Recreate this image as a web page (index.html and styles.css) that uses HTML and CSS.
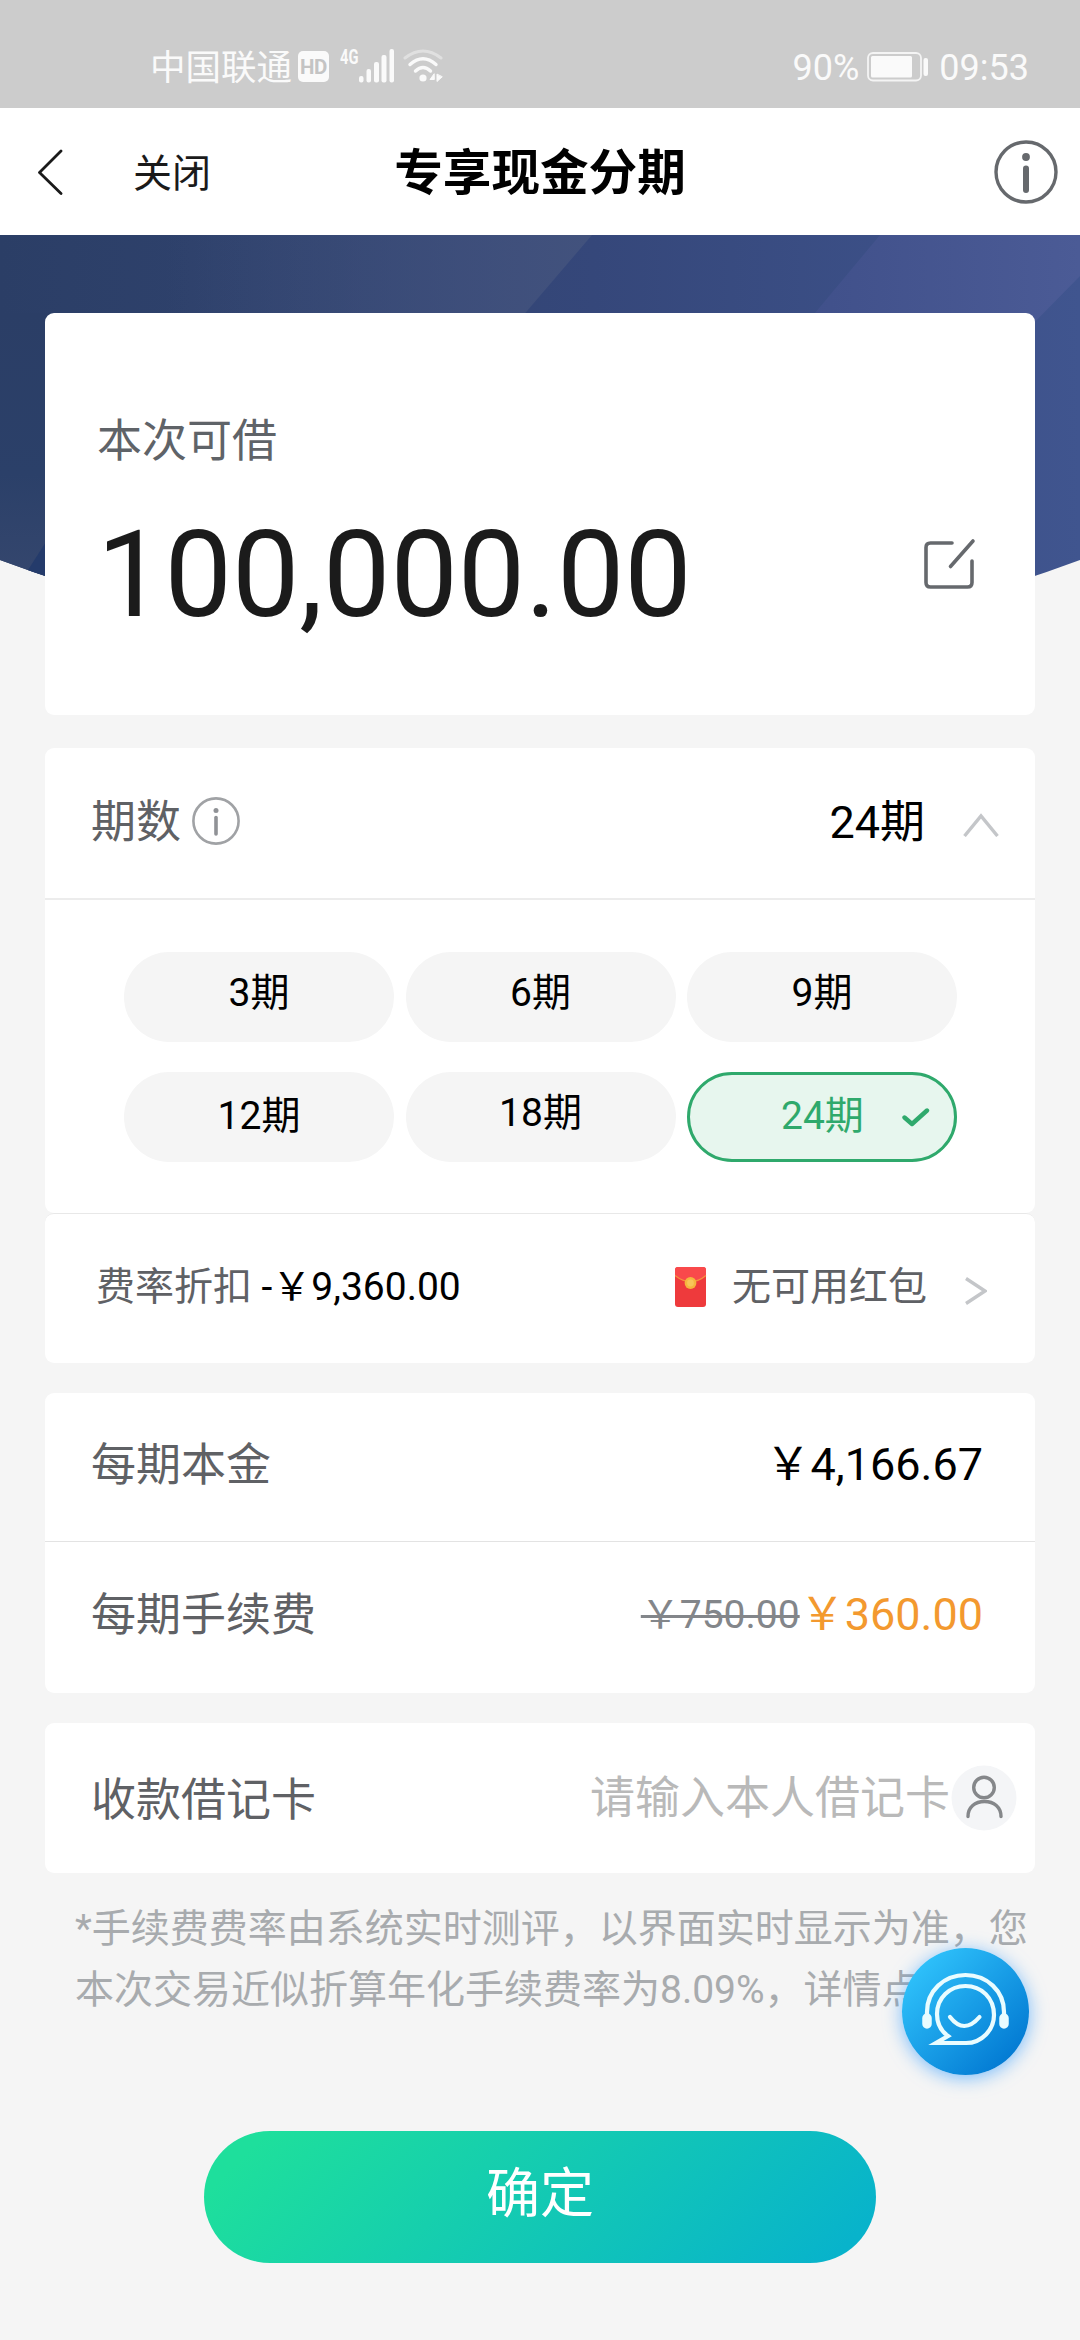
FILE: index.html
```html
<!DOCTYPE html>
<html lang="zh-CN">
<head>
<meta charset="utf-8">
<title>专享现金分期</title>
<link rel="stylesheet" href="styles.css">
</head>
<body>
<div class="app">
  <div class="status">
    <div class="status-left">
      <span class="carrier">中国联通</span>
      <span class="hd">HD</span>
      <span class="net">4G</span>
      <svg class="signal" width="36" height="34" viewBox="0 0 36 34" fill="#fafafa">
        <rect x="0" y="27" width="4.5" height="6.500" rx="2"/><rect x="7.500" y="20" width="4.500" height="13.500" rx="2"/><rect x="15" y="13" width="5" height="20.500" rx="2"/><rect x="22.500" y="6" width="5" height="27.500" rx="2"/><rect x="30.500" y="0" width="4.500" height="33.500" rx="2"/>
      </svg>
      <svg class="wifi" width="42" height="34" viewBox="0 0 42 34" fill="none" stroke-width="3.400" stroke-linecap="round">
        <path d="M2 9Q20 -5 38 9" stroke="#e0e0e0" stroke-width="3"/>
        <path d="M7 15.500Q20 4 33 15.500" stroke="#fafafa"/>
        <path d="M12.500 22Q20 15 27.500 22" stroke="#fafafa"/>
        <circle cx="20" cy="29" r="3.600" fill="#fafafa"/>
        <path d="M31 25L27 30.500H31ZM34 25.500V32.500L39 28Z" fill="#fafafa" stroke="#fafafa" stroke-width="1"/>
      </svg>
    </div>
    <div class="status-right">
      <span>90%</span>
      <svg class="battery" width="62" height="30" viewBox="0 0 62 30">
        <rect x="1" y="1" width="53" height="27.500" rx="5" fill="none" stroke="#f4f4f4" stroke-width="1.800"/>
        <rect x="4" y="4" width="41" height="21.500" rx="1.500" fill="#fafafa"/>
        <rect x="56.500" y="6" width="4.500" height="18" rx="2" fill="#fafafa"/>
      </svg>
      <span>09:53</span>
    </div>
  </div>

  <header class="header">
    <div class="header-side">
      <svg width="26" height="46" viewBox="0 0 26 46" fill="none" stroke="#1a1a1a" stroke-width="2.800" stroke-linecap="round" stroke-linejoin="round"><path d="M24 2L2.500 23.500L24 44.500"/></svg>
      <span class="close">关闭</span>
    </div>
    <h1 class="title">专享现金分期</h1>
    <svg class="header-info" width="64" height="64" viewBox="0 0 64 64"><circle cx="32" cy="32" r="30" fill="none" stroke="#66696d" stroke-width="3.400"/><circle cx="32" cy="17" r="3.900" fill="#66696d"/><path d="M32 28.500V50" stroke="#66696d" stroke-width="6" stroke-linecap="round"/></svg>
  </header>

  <main class="main">
    <svg class="hero" width="1080" height="400" viewBox="0 0 1080 400">
      <defs>
        <linearGradient id="navy" x1="0" x2="1"><stop offset="0" stop-color="#2b3e66"/><stop offset=".3" stop-color="#30436f"/><stop offset=".55" stop-color="#35477a"/><stop offset="1" stop-color="#40558f"/></linearGradient>
        <linearGradient id="haze" x1=".2" x2="1"><stop offset="0" stop-color="#42527d" stop-opacity="0"/><stop offset="1" stop-color="#42527d"/></linearGradient>
        <linearGradient id="facet" x1="0" x2="1"><stop offset="0" stop-color="#40508a"/><stop offset="1" stop-color="#4b5b96"/></linearGradient>
        <linearGradient id="edge" x1="0" y1="0" x2="0" y2="1"><stop offset="0" stop-color="#2b3e66"/><stop offset=".5" stop-color="#2b4069"/><stop offset="1" stop-color="#3a4a70"/></linearGradient>
        <clipPath id="bowl"><path d="M0 0H1080V325Q810 425 540 425T0 325Z"/></clipPath>
      </defs>
      <g clip-path="url(#bowl)">
        <rect width="1080" height="400" fill="url(#navy)"/>
        <rect y="78" width="60" height="322" fill="url(#edge)"/>
        <path d="M60 0H592L515 90H60Z" fill="url(#haze)"/>
        <path d="M880 0H1080V41L1020 102L805 90Z" fill="url(#facet)"/>
        <path d="M28 335L60 285V360H28Z" fill="#243b6b"/>
      </g>
    </svg>

    <section class="card amount-card">
      <div>
        <div class="amount-label">本次可借</div>
        <div class="amount">100,000.00</div>
      </div>
      <svg class="edit" width="54" height="54" viewBox="0 0 54 54" fill="none" stroke="#66696d" stroke-width="3.600" stroke-linecap="round" stroke-linejoin="round"><path d="M28 6H6.500Q2 6 2 10.500V45.500Q2 50 6.500 50H43.500Q48 50 48 45.500V24M49 4L26.500 29.500"/></svg>
    </section>

    <section class="card term-card">
      <div class="row term-head">
        <span class="label">期数</span>
        <svg class="term-info" width="48" height="48" viewBox="0 0 48 48"><circle cx="24" cy="24" r="22.600" fill="none" stroke="#a0a2a5" stroke-width="2.600"/><circle cx="24" cy="13.500" r="2.500" fill="#909296"/><path d="M24 20.500V37" stroke="#909296" stroke-width="3.600" stroke-linecap="round"/></svg>
        <span class="term-value">24期</span>
        <svg class="up" width="36" height="24" viewBox="0 0 36 24" fill="none" stroke="#c4c6c9" stroke-width="3.400"><path d="M1.500 23L18 3L34.500 23"/></svg>
      </div>
      <div class="terms">
        <div class="term">3期</div>
        <div class="term">6期</div>
        <div class="term">9期</div>
        <div class="term low">12期</div>
        <div class="term">18期</div>
        <div class="term low selected"><span>24期</span><svg width="28" height="20" viewBox="0 0 28 20" fill="none" stroke="#2fa96c" stroke-width="4.400" stroke-linecap="round" stroke-linejoin="round"><path d="M2.500 9.500L10 16L25 2.500"/></svg></div>
      </div>
    </section>

    <section class="card discount-card">
      <span class="discount-label">费率折扣</span>
      <span class="discount">-￥9,360.00</span>
      <svg class="packet" width="32" height="40" viewBox="0 0 32 40"><rect width="31" height="40" rx="3" fill="#ee3a3c"/><path d="M0 8.500V3Q0 0 3 0H28Q31 0 31 3V8.500Q15.500 21 0 8.500Z" fill="#f9494b"/><path d="M0 8.500Q15.500 21 31 8.500" fill="none" stroke="#f5923e" stroke-width="1.200"/><circle cx="15.500" cy="16" r="5.900" fill="#f5b63e"/><circle cx="15.500" cy="16" r="3.400" fill="#f8c659"/></svg>
      <span class="packet-text">无可用红包</span>
      <svg class="right" width="22" height="28" viewBox="0 0 22 28" fill="none" stroke="#c4c6c9" stroke-width="3.400"><path d="M1 1.500L20 14L1 26.500"/></svg>
    </section>

    <section class="card fee-card">
      <div class="row principal">
        <span class="label">每期本金</span>
        <span class="value">￥4,166.67</span>
      </div>
      <div class="row fee">
        <span class="label">每期手续费</span>
        <span class="value"><s class="old">￥750.00</s><span class="new">￥360.00</span></span>
      </div>
    </section>

    <section class="card row debit-card">
      <span class="label">收款借记卡</span>
      <span class="placeholder">请输入本人借记卡</span>
      <svg class="person" width="66" height="66" viewBox="0 0 66 66"><circle cx="33" cy="33" r="32.500" fill="#f4f5f7"/><g fill="none" stroke="#85878a" stroke-width="3.400" stroke-linecap="round"><circle cx="33" cy="22.500" r="10.300"/><path d="M17 51.500C17 42 24 36.500 33.500 36.500S50 42 50 51.500"/></g></svg>
    </section>

    <p class="note">*手续费费率由系统实时测评，以界面实时显示为准，您<br>本次交易近似折算年化手续费率为8.09%，详情点</p>

    <button class="confirm">确定</button>
  </main>

  <div class="service">
    <svg width="127" height="127" viewBox="0 0 127 127" fill="none" stroke="#e9fcff" stroke-width="4.200" stroke-linecap="round">
      <path d="M25 68V64C25 43 42 27 63.500 27S102 43 102 64V68"/>
      <path d="M34 95H64C80 95 92 81.500 92 67C92 50 79.500 38 63.500 38S35 50 35 66C35 75 39 83 46 88Z" stroke-linejoin="miter"/>
      <path d="M48 69Q62 87 77.500 69"/>
      <path d="M25 70V76M102 70V76" stroke-width="9.500"/>
    </svg>
  </div>
</div>
</body>
</html>
```

FILE: styles.css
```css
* { box-sizing: border-box; }
body {
  margin: 0;
  background: #f5f5f5;
  color: #000;
  font-family: Roboto, "Noto Sans CJK SC", sans-serif;
}
svg { display: block; flex: none; }
.app {
  position: relative;
  width: 1080px;
  height: 2340px;
  overflow: hidden;
  background: #f5f5f5;
}

.status {
  display: flex;
  justify-content: space-between;
  height: 108px;
  padding: 49px 51px 0 150px;
  background: #ccc;
  color: #fafafa;
  font-size: 36px;
  line-height: 38px;
}
.status-left, .status-right { display: flex; align-items: flex-start; }
.carrier { width: 142px; font-size: 35.5px; }
.hd {
  width: 31px;
  height: 31px;
  margin: 2px 0 0 6px;
  border-radius: 5px;
  background: #fafafa;
  color: #c4c4c4;
  font-size: 20.5px;
  font-weight: 700;
  line-height: 32px;
  text-align: center;
  letter-spacing: -0.5px;
}
.net {
  width: 20px;
  margin-left: 11px;
  font-size: 21px;
  font-weight: 700;
  line-height: 17px;
  transform: scaleX(.7);
  transform-origin: left;
}
.signal { margin-left: -1px; }
.wifi { margin-left: 8px; }
.battery { margin: 3px 10px 0 8px; }

.header {
  display: grid;
  grid-template-columns: 1fr auto 1fr;
  align-items: center;
  height: 127px;
  padding: 0 22px 0 37px;
  background: #fff;
}
.header-side { display: flex; align-items: center; }
.close { margin: 4px 0 0 70px; font-size: 39px; line-height: 46px; color: #1a1a1a; }
.title { margin: 4px 8px 0 -7px; font-size: 48.6px; line-height: 60px; font-weight: 700; }
.header-info { justify-self: end; }

.main { position: relative; padding: 78px 45px 0; }
.hero { position: absolute; left: 0; top: 0; }
.card { position: relative; background: #fff; border-radius: 9px; }
.row { display: flex; align-items: center; }
.label { font-size: 45px; line-height: 60px; color: #5f6165; }

.amount-card {
  display: flex;
  justify-content: space-between;
  height: 402px;
  padding: 98px 57px 0 52px;
}
.amount-label { margin-top: 1px; font-size: 45px; line-height: 60px; color: #5f6368; }
.amount { margin-top: 33px; font-size: 120px; line-height: 140px; color: #1b1b1b; }
.edit { margin-top: 126px; }

.term-card { height: 465px; margin-top: 33px; }
.term-head { height: 152px; padding: 0 36px 4px 46px; border-bottom: 2px solid #ececec; }
.term-head .label, .term-value { margin-top: 4px; }
.term-info { margin-left: 11px; }
.term-value { margin-left: auto; font-size: 45px; line-height: 60px; }
.up { margin: 8px 0 0 38px; }
.terms {
  display: grid;
  grid-template-columns: repeat(3, 270px);
  gap: 30px 11.5px;
  padding: 52px 0 0 79px;
}
.term {
  height: 90px;
  border-radius: 45px;
  background: #f5f5f5;
  font-size: 39px;
  line-height: 82px;
  text-align: center;
}
.term.low { padding-top: 3px; }
.term.selected {
  display: flex;
  align-items: center;
  padding: 0 24px 3px 91px;
  border: 3px solid #2fa96c;
  background: #e7f6ee;
  color: #2fa96c;
}
.selected svg { margin: 4px 0 0 auto; }

.discount-card {
  display: flex;
  align-items: center;
  height: 150px;
  padding: 0 48px 4px 51px;
  border-top: 1px solid #e8e8e8;
  font-size: 39px;
  line-height: 50px;
}
.discount-label, .packet-text { color: #5f6165; }
.discount { margin-left: 9.5px; }
.packet { margin-left: auto; }
.packet-text { margin-left: 25px; }
.right { margin: 8px 0 0 38px; }

.fee-card { height: 300px; margin-top: 30px; }
.principal { height: 149px; padding: 0 52px 3px 46px; border-bottom: 1px solid #e3e3e3; }
.principal .value { margin-bottom: 2px; }
.fee { height: 151px; padding: 0 52px 4px 46px; }
.value { margin-left: auto; font-size: 45px; line-height: 60px; }
.old { font-size: 39px; color: #83868a; text-decoration-thickness: 3px; position: relative; top: -2px; }
.new { color: #f3992f; }

.debit-card { height: 150px; margin-top: 30px; padding: 0 18px 0 46px; }
.debit-card .label { margin-top: 5px; }
.placeholder { margin: 1px 0 0 auto; font-size: 45px; line-height: 60px; color: #b9b9b9; }
.person { margin-left: 1px; }

.note {
  margin: 26px -20px 0 30px;
  color: #a8abae;
  font-size: 39px;
  line-height: 60.5px;
  white-space: nowrap;
}
.confirm {
  display: block;
  width: 672px;
  height: 132px;
  margin: 111px auto 0;
  padding: 0 0 5px;
  border: 0;
  border-radius: 66px;
  background: linear-gradient(135deg, #1edf9c 8%, #08b3cb 94%);
  color: #fff;
  font: inherit;
  font-size: 54px;
  line-height: 70px;
}
.service {
  position: absolute;
  left: 902px;
  top: 1948px;
  width: 127px;
  height: 127px;
  border-radius: 50%;
  background: linear-gradient(135deg, #2fc2fb 12%, #0279d2 88%);
  box-shadow: 0 3px 18px rgba(40, 150, 255, .6);
}
```
